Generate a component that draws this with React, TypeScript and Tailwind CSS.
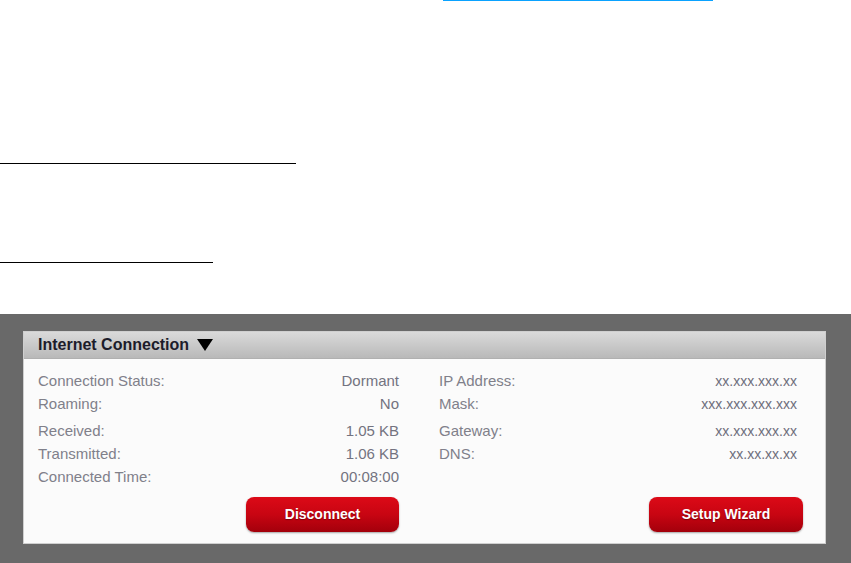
import React from "react";

const font = { fontFamily: '"Liberation Sans", Arial, sans-serif' };

function Row({ label, value, mt = false, ip = false }: { label: string; value: string; mt?: boolean; ip?: boolean }) {
  return (
    <div className={`flex h-[23px] items-center justify-between ${mt ? "mt-[4px]" : ""}`}>
      <span className="text-[15px] text-[#80808a]">{label}</span>
      {ip ? (
        <span className="pr-[6px] text-[14px] tracking-[0px] text-[#6e6e7c]">{value}</span>
      ) : (
        <span className="text-[15px] text-[#737380]">{value}</span>
      )}
    </div>
  );
}

function RedButton({ children }: { children: React.ReactNode }) {
  return (
    <button className="h-[35px] rounded-[8px] bg-gradient-to-b from-[#dc0a17] via-[#c80512] to-[#a3000b] text-[14px] font-bold text-white shadow-[0_1px_2px_rgba(0,0,0,0.35)] [text-shadow:0_1px_1px_rgba(0,0,0,0.35)]">
      {children}
    </button>
  );
}

export default function App() {
  return (
    <div className="h-[563px] w-[851px] overflow-hidden bg-white" style={font}>
      <div className="h-[314px]">
        <div className="ml-[443px] h-px w-[270px] bg-[#0aa2ff]" />
        <div className="mt-[162px] h-px w-[296px] bg-black" />
        <div className="mt-[98px] h-px w-[213px] bg-black" />
      </div>
      <div className="h-[249px] bg-[#696969] pl-[23px] pr-[25px] pt-[17px]">
        <div className="border border-[#cfcfcf] bg-[#fbfbfb]">
          <div className="flex h-[27px] items-center gap-[8px] border-b border-[#b0b0b0] bg-gradient-to-b from-[#dadada] to-[#b9b9b9] pl-[14px]">
            <span className="text-[16px] font-bold text-[#1c1c2a]">Internet Connection</span>
            <svg width="16" height="12" viewBox="0 0 16 12">
              <polygon points="0,0 16,0 8,12" fill="#000" />
            </svg>
          </div>
          <div className="flex pb-[11px] pl-[14px] pt-[11px]">
            <div className="flex w-[361px] flex-col">
              <Row label="Connection Status:" value="Dormant" />
              <Row label="Roaming:" value="No" />
              <Row label="Received:" value="1.05 KB" mt />
              <Row label="Transmitted:" value="1.06 KB" />
              <Row label="Connected Time:" value="00:08:00" />
              <div className="mt-[8px] flex justify-end">
                <RedButton>
                  <span className="block w-[153px]">Disconnect</span>
                </RedButton>
              </div>
            </div>
            <div className="ml-[40px] flex w-[364px] flex-col">
              <Row label="IP Address:" value="xx.xxx.xxx.xx" ip />
              <Row label="Mask:" value="xxx.xxx.xxx.xxx" ip />
              <Row label="Gateway:" value="xx.xxx.xxx.xx" mt ip />
              <Row label="DNS:" value="xx.xx.xx.xx" ip />
              <div className="h-[23px]" />
              <div className="mt-[8px] flex justify-end">
                <RedButton>
                  <span className="block w-[154px]">Setup Wizard</span>
                </RedButton>
              </div>
            </div>
          </div>
        </div>
      </div>
    </div>
  );
}
